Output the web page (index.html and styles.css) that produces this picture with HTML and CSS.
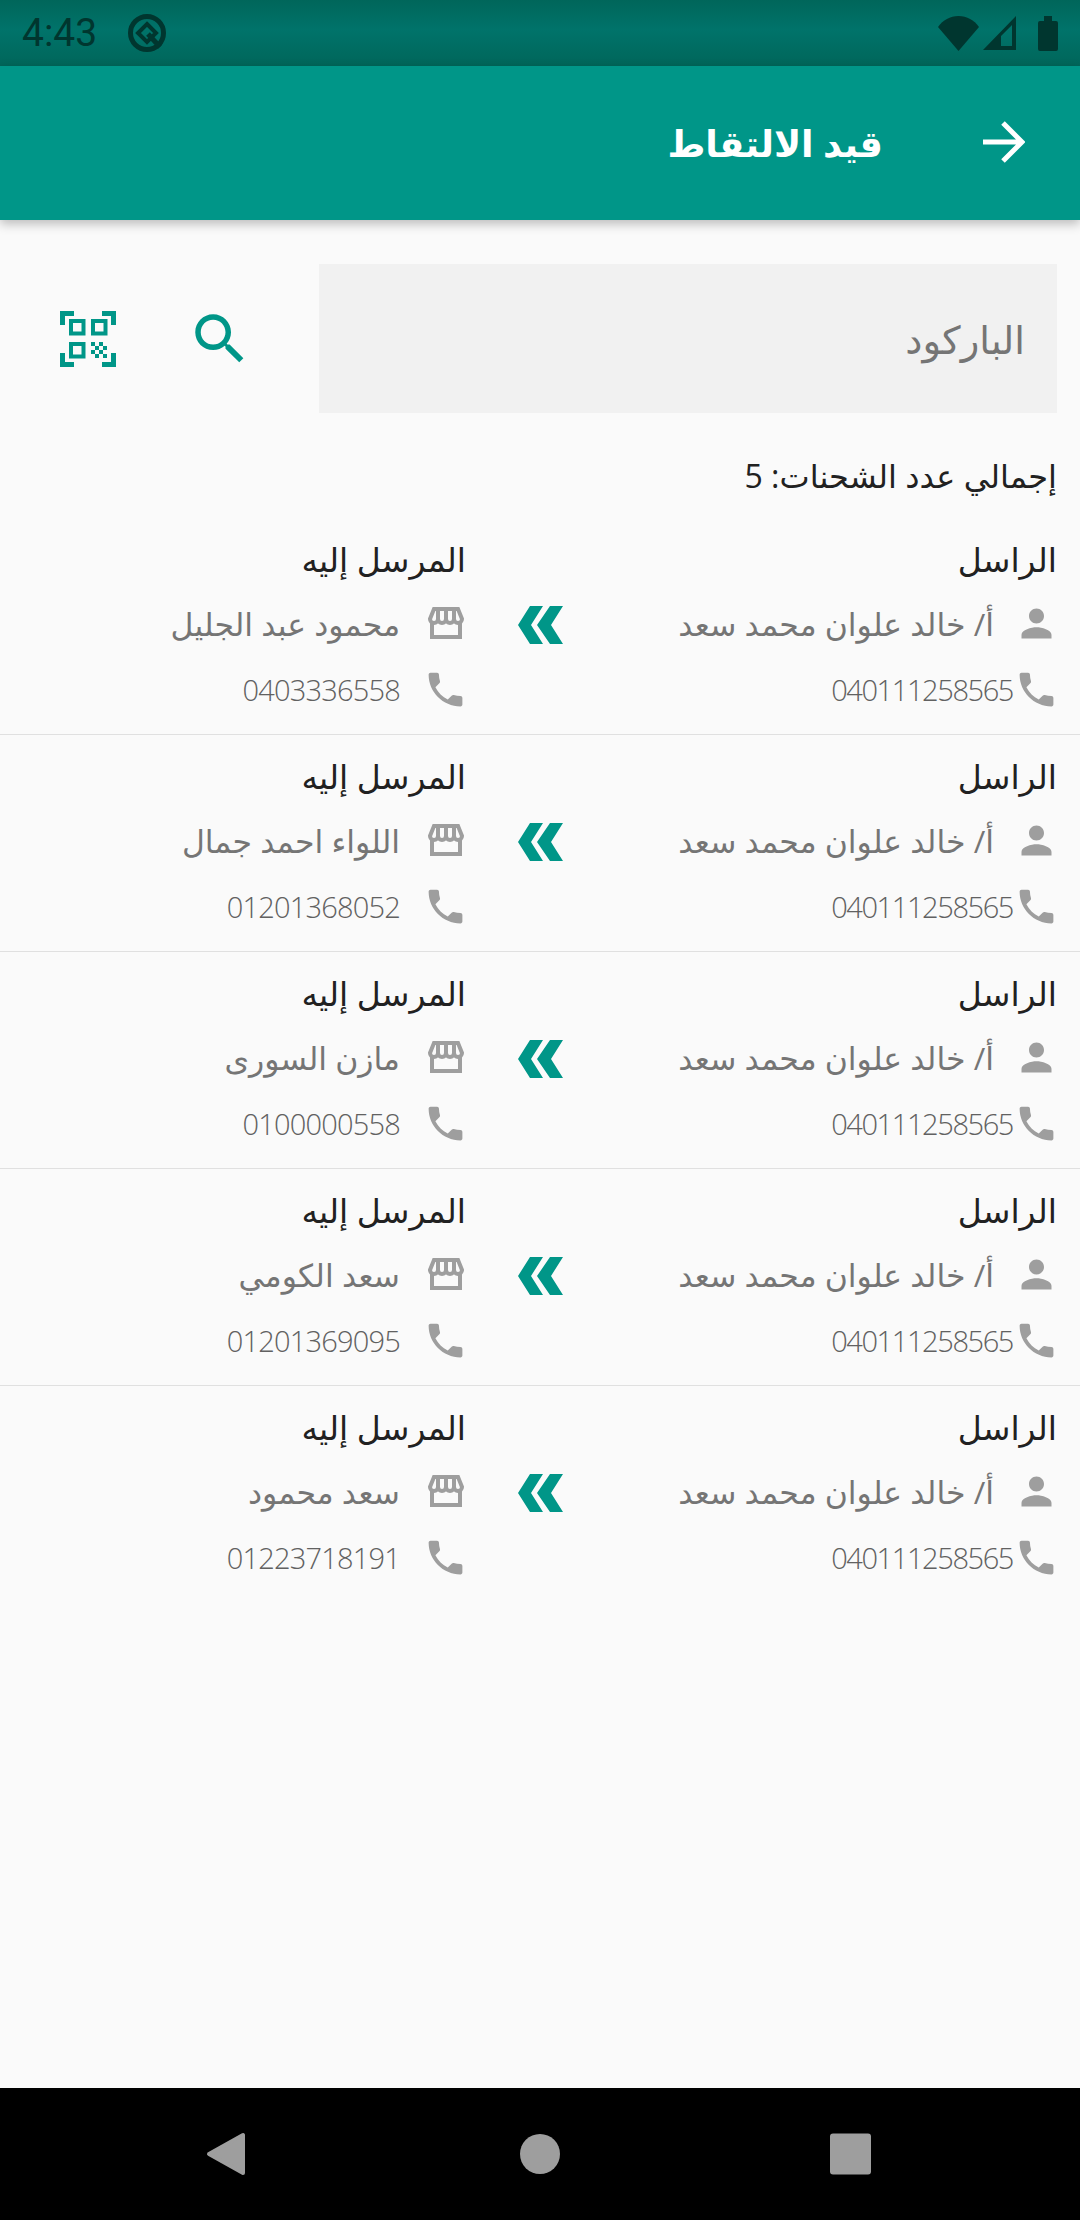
FILE: index.html
```html
<!DOCTYPE html>
<html lang="ar" dir="rtl">
<head>
    <meta charset="UTF-8">
    <title>قيد الالتقاط</title>
    <link rel="stylesheet" href="styles.css">
</head>
<body>
<svg class="defs" width="0" height="0">
    <symbol id="i-person" viewBox="0 0 24 24"><path d="M12 12c2.21 0 4-1.79 4-4s-1.79-4-4-4-4 1.79-4 4 1.79 4 4 4zm0 2c-2.67 0-8 1.34-8 4v2h16v-2c0-2.66-5.33-4-8-4z"/></symbol>
    <symbol id="i-phone" viewBox="0 0 24 24"><path d="M6.62 10.79c1.44 2.83 3.76 5.14 6.59 6.59l2.2-2.2c.27-.27.67-.36 1.02-.24 1.12.37 2.33.57 3.57.57.55 0 1 .45 1 1V20c0 .55-.45 1-1 1-9.39 0-17-7.61-17-17 0-.55.45-1 1-1h3.5c.55 0 1 .45 1 1 0 1.25.2 2.45.57 3.57.11.35.03.74-.25 1.02l-2.2 2.2z"/></symbol>
    <symbol id="i-store" viewBox="0 0 36 32"><path class="store-line" d="M6 2h24l4 10a4 4 0 0 1-8 0 4 4 0 0 1-8 0 4 4 0 0 1-8 0 4 4 0 0 1-8 0zM10 2v10M18 2v10M26 2v10M4 16v14h28V16"/></symbol>
    <symbol id="i-chevrons" viewBox="0 0 45 38"><path d="M12 0 0 19 12 38H25L13 19 25 0ZM32 0 19 19 32 38H45L33 19 45 0Z"/></symbol>
</svg>

<div class="status">
    <div class="status-left">
        <span class="time">4:43</span>
        <svg class="q-icon" viewBox="0 0 38 38"><circle cx="19" cy="19" r="16.5" fill="none" stroke="#00362f" stroke-width="5"/><path d="M19 10 28 19 19 28 10 19Z" fill="none" stroke="#00362f" stroke-width="4"/><path d="M20 20 32 33" stroke="#00362f" stroke-width="5"/></svg>
    </div>
    <div class="status-right">
        <svg class="wifi" viewBox="0 0 41 35"><path d="M0 11C5 4 12 0 20.500 0S36 4 41 11L20.500 35Z"/></svg>
        <svg class="signal" viewBox="0 0 33 34"><path fill-rule="evenodd" d="M33 0V34H0ZM18 20V30H29V9Z"/></svg>
        <svg class="battery" viewBox="0 0 20 35"><path d="M6 0h8v5h4a2 2 0 0 1 2 2v26a2 2 0 0 1-2 2H2a2 2 0 0 1-2-2V7a2 2 0 0 1 2-2h4z"/></svg>
    </div>
</div>

<div class="appbar">
    <svg class="back" viewBox="0 0 44 44"><path d="M2 22H40M22 3 41 22 22 41" fill="none" stroke="#fff" stroke-width="5"/></svg>
    <h1 class="title">قيد الالتقاط</h1>
</div>

<div class="main">
    <div class="search">
        <input class="field" type="text" placeholder="الباركود">
        <svg class="search-icon" viewBox="0 0 24 24"><path d="M15.500 14h-.79l-.28-.27C15.410 12.590 16 11.110 16 9.500 16 5.910 13.090 3 9.500 3S3 5.910 3 9.500 5.910 16 9.500 16c1.610 0 3.090-.59 4.230-1.570l.27.28v.79l5 4.990L20.490 19l-4.990-5zm-6 0C7.010 14 5 11.990 5 9.500S7.010 5 9.500 5 14 7.010 14 9.500 11.990 14 9.500 14z"/></svg>
        <svg class="qr-icon" viewBox="0 0 56 56">
            <path d="M0 14V0H14V5H5V14ZM42 0H56V14H51V5H42ZM0 42H5V51H14V56H0ZM51 42H56V56H42V51H51Z"/>
            <path d="M9 8H25.500V24.500H9ZM13 12V20.500H21.500V12ZM31 8H47.500V24.500H31ZM35 12V20.500H43.500V12ZM9 31H25.500V47.500H9ZM13 35V43.500H21.500V35Z" fill-rule="evenodd"/>
            <path d="M31 31h4v4h-4zM39 31h4v4h-4zM35 35h4v4h-4zM43 35h4v4h-4zM31 39h4v4h-4zM39 39h4v4h-4zM35 43h4v4h-4zM43 43h4v4h-4z"/>
        </svg>
    </div>

    <p class="total">إجمالي عدد الشحنات: 5</p>

    <div class="row">
        <div class="party sender">
            <p class="label">الراسل</p>
            <div class="info"><svg class="ico"><use href="#i-person"/></svg><span class="name">أ/ خالد علوان محمد سعد</span></div>
            <div class="info tel"><svg class="ico"><use href="#i-phone"/></svg><span class="num">040111258565</span></div>
        </div>
        <svg class="chevrons"><use href="#i-chevrons"/></svg>
        <div class="party">
            <p class="label">المرسل إليه</p>
            <div class="info"><span class="ico-box"><svg class="store"><use href="#i-store"/></svg></span><span class="name">محمود عبد الجليل</span></div>
            <div class="info"><svg class="ico"><use href="#i-phone"/></svg><span class="num">0403336558</span></div>
        </div>
    </div>
    <div class="row">
        <div class="party sender">
            <p class="label">الراسل</p>
            <div class="info"><svg class="ico"><use href="#i-person"/></svg><span class="name">أ/ خالد علوان محمد سعد</span></div>
            <div class="info tel"><svg class="ico"><use href="#i-phone"/></svg><span class="num">040111258565</span></div>
        </div>
        <svg class="chevrons"><use href="#i-chevrons"/></svg>
        <div class="party">
            <p class="label">المرسل إليه</p>
            <div class="info"><span class="ico-box"><svg class="store"><use href="#i-store"/></svg></span><span class="name">اللواء احمد جمال</span></div>
            <div class="info"><svg class="ico"><use href="#i-phone"/></svg><span class="num">01201368052</span></div>
        </div>
    </div>
    <div class="row">
        <div class="party sender">
            <p class="label">الراسل</p>
            <div class="info"><svg class="ico"><use href="#i-person"/></svg><span class="name">أ/ خالد علوان محمد سعد</span></div>
            <div class="info tel"><svg class="ico"><use href="#i-phone"/></svg><span class="num">040111258565</span></div>
        </div>
        <svg class="chevrons"><use href="#i-chevrons"/></svg>
        <div class="party">
            <p class="label">المرسل إليه</p>
            <div class="info"><span class="ico-box"><svg class="store"><use href="#i-store"/></svg></span><span class="name">مازن السورى</span></div>
            <div class="info"><svg class="ico"><use href="#i-phone"/></svg><span class="num">0100000558</span></div>
        </div>
    </div>
    <div class="row">
        <div class="party sender">
            <p class="label">الراسل</p>
            <div class="info"><svg class="ico"><use href="#i-person"/></svg><span class="name">أ/ خالد علوان محمد سعد</span></div>
            <div class="info tel"><svg class="ico"><use href="#i-phone"/></svg><span class="num">040111258565</span></div>
        </div>
        <svg class="chevrons"><use href="#i-chevrons"/></svg>
        <div class="party">
            <p class="label">المرسل إليه</p>
            <div class="info"><span class="ico-box"><svg class="store"><use href="#i-store"/></svg></span><span class="name">سعد الكومي</span></div>
            <div class="info"><svg class="ico"><use href="#i-phone"/></svg><span class="num">01201369095</span></div>
        </div>
    </div>
    <div class="row last">
        <div class="party sender">
            <p class="label">الراسل</p>
            <div class="info"><svg class="ico"><use href="#i-person"/></svg><span class="name">أ/ خالد علوان محمد سعد</span></div>
            <div class="info tel"><svg class="ico"><use href="#i-phone"/></svg><span class="num">040111258565</span></div>
        </div>
        <svg class="chevrons"><use href="#i-chevrons"/></svg>
        <div class="party">
            <p class="label">المرسل إليه</p>
            <div class="info"><span class="ico-box"><svg class="store"><use href="#i-store"/></svg></span><span class="name">سعد محمود</span></div>
            <div class="info"><svg class="ico"><use href="#i-phone"/></svg><span class="num">01223718191</span></div>
        </div>
    </div>
</div>

<div class="nav">
    <svg class="nav-icon" viewBox="0 0 44 44"><path d="M5 22 39 3V41Z" fill="#9e9e9e" stroke="#9e9e9e" stroke-width="4" stroke-linejoin="round"/></svg>
    <svg class="nav-icon" viewBox="0 0 44 44"><circle cx="22" cy="22" r="20" fill="#9e9e9e"/></svg>
    <svg class="nav-icon square" viewBox="0 0 44 44"><rect x="1" y="1.500" width="41" height="41" rx="3" fill="#9e9e9e"/></svg>
</div>
</body>
</html>
```

FILE: styles.css
```css
* {
    margin: 0;
    padding: 0;
    box-sizing: border-box;
}

body {
    width: 1080px;
    height: 2220px;
    display: flex;
    flex-direction: column;
    overflow: hidden;
    background: #fafafa;
    font-family: "Open Sans", "DejaVu Sans", sans-serif;
}

.defs {
    position: absolute;
}

/* status bar */
.status {
    direction: ltr;
    height: 66px;
    flex: none;
    display: flex;
    align-items: center;
    justify-content: space-between;
    padding: 0 22px;
    background: linear-gradient(#00665a, #00736a 45%, #00665a);
    color: #00362f;
}

.status-left,
.status-right {
    display: flex;
    align-items: center;
}

.time {
    font-family: Roboto, sans-serif;
    font-size: 39px;
}

.q-icon {
    width: 38px;
    height: 38px;
    margin-left: 31px;
}

.wifi {
    width: 41px;
    height: 35px;
    fill: #00362f;
}

.signal {
    width: 33px;
    height: 34px;
    margin-left: 4px;
    fill: #00362f;
}

.battery {
    width: 20px;
    height: 35px;
    margin-left: 22px;
    fill: #00362f;
}

/* app bar */
.appbar {
    position: relative;
    height: 154px;
    flex: none;
    display: flex;
    align-items: center;
    padding: 0 55px;
    background: #009688;
    box-shadow: 0 4px 10px rgba(0, 0, 0, .25);
}

.back {
    width: 44px;
    height: 44px;
    margin-top: -2px;
}

.title {
    margin-right: 98px;
    font-size: 36.500px;
    font-weight: bold;
    color: #fff;
}

/* body */
.main {
    flex: 1;
    padding-top: 44px;
}

.search {
    display: flex;
    align-items: center;
    padding: 0 23px;
}

.field {
    width: 738px;
    height: 149px;
    padding: 0 32px;
    border: 0;
    background: #f1f1f1;
    font-family: inherit;
    font-size: 38.500px;
}

.field::placeholder {
    color: #757575;
    opacity: 1;
}

.search-icon {
    width: 66px;
    height: 66px;
    margin-right: 66px;
    fill: #009688;
}

.qr-icon {
    width: 56px;
    height: 56px;
    margin-right: 71px;
    fill: #009688;
}

.total {
    height: 44px;
    line-height: 44px;
    margin: 41px 23px 20px;
    font-size: 32px;
    color: #212121;
}

.row {
    height: 217px;
    display: flex;
    align-items: flex-start;
    padding: 20px 23px 0;
    border-bottom: 1px solid #e0e0e0;
}

.row.last {
    border-bottom: 0;
}

.party {
    flex: 1;
}

.sender {
    flex: none;
    width: 477px;
}

.label {
    height: 44px;
    line-height: 44px;
    margin-bottom: 8px;
    font-size: 33px;
    color: #212121;
}

.info {
    height: 66px;
    display: flex;
    align-items: center;
    gap: 23px;
    margin-right: -2px;
}

.sender .info {
    gap: 20px;
}

.sender .info.tel {
    gap: 1px;
}

.name {
    font-size: 31.500px;
    color: #757575;
}

.num {
    font-size: 29px;
    font-weight: 300;
    letter-spacing: -.8px;
    color: #616161;
}

.tel .num {
    letter-spacing: -1.400px;
}

.ico {
    width: 45px;
    height: 45px;
    fill: #9e9e9e;
}

.ico-box {
    width: 45px;
    height: 45px;
    display: flex;
    align-items: center;
    justify-content: center;
}

.store {
    width: 36px;
    height: 32px;
}

.store-line {
    fill: none;
    stroke: #9e9e9e;
    stroke-width: 4;
}

.chevrons {
    width: 45px;
    height: 38px;
    flex: none;
    margin: 68px 17px 0 52px;
    fill: #009688;
}

/* navigation bar */
.nav {
    height: 132px;
    flex: none;
    direction: ltr;
    display: flex;
    align-items: center;
    justify-content: center;
    gap: 270px;
    background: #000;
}

.nav-icon {
    width: 44px;
    height: 44px;
}

.square {
    margin: 0 3px 0 -3px;
}
```
